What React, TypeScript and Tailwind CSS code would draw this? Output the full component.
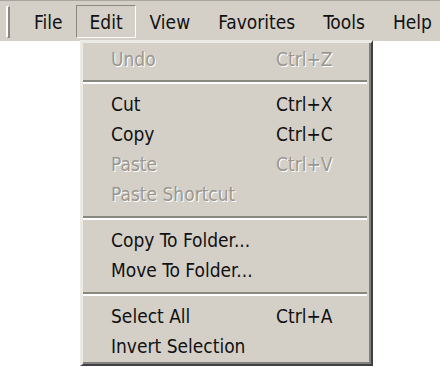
import React from "react";

type Item = { label: string; shortcut?: string; disabled?: boolean } | { sep: string };

const items: Item[] = [
  { label: "Undo", shortcut: "Ctrl+Z", disabled: true },
  { sep: "mt-[6px] mb-[5px]" },
  { label: "Cut", shortcut: "Ctrl+X" },
  { label: "Copy", shortcut: "Ctrl+C" },
  { label: "Paste", shortcut: "Ctrl+V", disabled: true },
  { label: "Paste Shortcut", disabled: true },
  { sep: "mt-[7px] mb-[5px]" },
  { label: "Copy To Folder..." },
  { label: "Move To Folder..." },
  { sep: "mt-[7px] mb-[5px]" },
  { label: "Select All", shortcut: "Ctrl+A" },
  { label: "Invert Selection" },
];

const font = "[font-family:'DejaVu_Sans_Condensed','DejaVu_Sans',sans-serif]";

export default function App() {
  const menus = ["File", "Edit", "View", "Favorites", "Tools", "Help"];
  return (
    <div className={`relative w-[440px] h-[367px] bg-white overflow-hidden ${font}`}>
      <div className="flex items-center h-[41px] pt-[1px] bg-[#d4d0c8] border-t border-[#aaa69e]">
        <div className="ml-[6px] mr-[10px] w-[5px] h-[32px] border-l-2 border-t border-white border-r-2 border-b border-r-[#8a877f] border-b-[#8a877f]" />
        {menus.map((m) => (
          <div
            key={m}
            className={
              m === "Edit"
                ? "h-[33px] px-[12px] pt-[2px] flex items-center text-[19px] text-[#111] border border-t-[#8a877f] border-l-[#8a877f] border-r-white border-b-white"
                : "h-[33px] px-[13px] pt-[2px] flex items-center text-[19px] text-[#111] border border-transparent"
            }
          >
            {m}
          </div>
        ))}
      </div>
      <div className="absolute left-[80px] top-[40px] w-[293px] bg-[#d4d0c8] border-l-[3px] border-t-[3px] border-[#eceae5] border-r-2 border-b-2 border-r-[#404040] border-b-[#404040]">
        <div className="border-r-2 border-b-2 border-[#808080] pt-[1px] pb-[1px]">
          {items.map((it, i) =>
            "sep" in it ? (
              <div key={i} className={`${it.sep} mr-[2px]`}>
                <div className="h-[2px] bg-[#8a877f]" />
                <div className="h-[2px] bg-white" />
              </div>
            ) : (
              <div
                key={i}
                className={`grid grid-cols-[165px_1fr] items-center h-[30px] pl-[28px] text-[19px] ${
                  it.disabled ? "text-[#9a9790] [text-shadow:1px_1px_0_#ffffff]" : "text-[#111]"
                }`}
              >
                <span>{it.label}</span>
                <span>{it.shortcut ?? ""}</span>
              </div>
            )
          )}
        </div>
      </div>
    </div>
  );
}
